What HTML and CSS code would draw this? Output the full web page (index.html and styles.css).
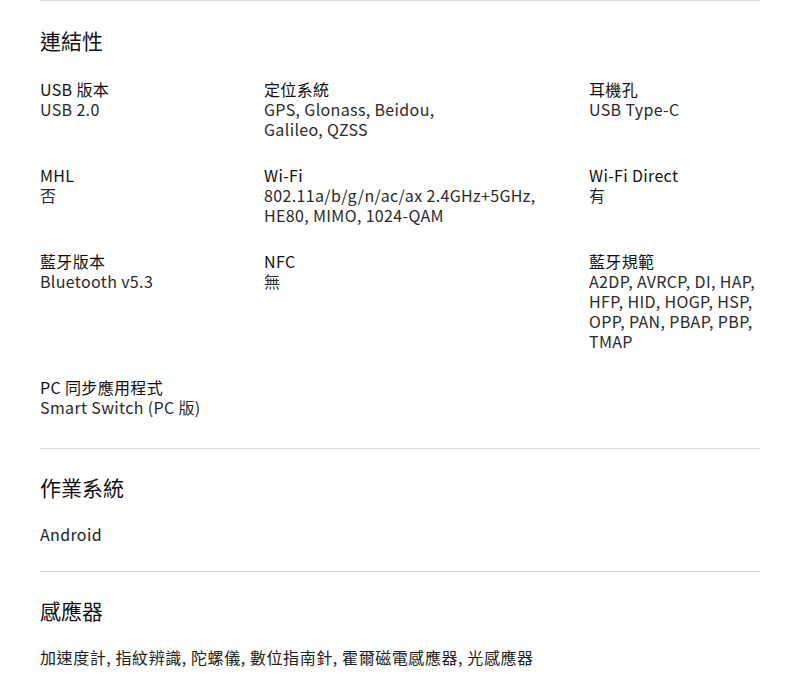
FILE: index.html
```html
<!DOCTYPE html>
<html lang="zh-Hant">
<head>
<meta charset="utf-8">
<title>規格</title>
<link rel="stylesheet" href="styles.css">
</head>
<body>
<div class="specs">
  <section class="spec-section spec-section--grid">
    <h2 class="spec-title">連結性</h2>
    <div class="spec-grid">
      <div class="spec-item"><div class="spec-name">USB 版本</div><div class="spec-value">USB 2.0</div></div>
      <div class="spec-item"><div class="spec-name">定位系統</div><div class="spec-value">GPS, Glonass, Beidou,<br>Galileo, QZSS</div></div>
      <div class="spec-item"><div class="spec-name">耳機孔</div><div class="spec-value">USB Type-C</div></div>
      <div class="spec-item"><div class="spec-name">MHL</div><div class="spec-value">否</div></div>
      <div class="spec-item"><div class="spec-name">Wi-Fi</div><div class="spec-value">802.11a/b/g/n/ac/ax 2.4GHz+5GHz,<br>HE80, MIMO, 1024-QAM</div></div>
      <div class="spec-item"><div class="spec-name">Wi-Fi Direct</div><div class="spec-value">有</div></div>
      <div class="spec-item"><div class="spec-name">藍牙版本</div><div class="spec-value">Bluetooth v5.3</div></div>
      <div class="spec-item"><div class="spec-name">NFC</div><div class="spec-value">無</div></div>
      <div class="spec-item"><div class="spec-name">藍牙規範</div><div class="spec-value">A2DP, AVRCP, DI, HAP,<br>HFP, HID, HOGP, HSP,<br>OPP, PAN, PBAP, PBP,<br>TMAP</div></div>
      <div class="spec-item"><div class="spec-name">PC 同步應用程式</div><div class="spec-value">Smart Switch (PC 版)</div></div>
    </div>
  </section>
  <section class="spec-section">
    <h2 class="spec-title">作業系統</h2>
    <div class="spec-plain">Android</div>
  </section>
  <section class="spec-section">
    <h2 class="spec-title">感應器</h2>
    <div class="spec-plain spec-plain--list">加速度計, 指紋辨識, 陀螺儀, 數位指南針, 霍爾磁電感應器, 光感應器</div>
  </section>
</div>
</body>
</html>
```
FILE: styles.css
```css
html, body {
  margin: 0;
  padding: 0;
  background: #fff;
}
body {
  font-family: "Noto Sans CJK TC", "Noto Sans", sans-serif;
  color: #1a1a1a;
  font-size: 16px;
  line-height: 20px;
  font-weight: 400;
  letter-spacing: 0.35px;
}
.specs {
  padding: 0 40px;
}
.spec-section {
  border-top: 1px solid #dddddd;
  padding: 23px 0 27px;
}
.spec-section--grid {
  padding: 24px 0 31px;
}
.spec-title {
  margin: 0 0 22px;
  font-size: 21px;
  line-height: 30px;
  font-weight: 400;
  letter-spacing: 0;
  color: #111;
}
.spec-section--grid .spec-title {
  margin-bottom: 24px;
}
.spec-grid {
  display: grid;
  grid-template-columns: 224px 325px 171px;
  row-gap: 26px;
}
.spec-name {
  color: #111;
}
.spec-value {
  color: #2a2a2a;
}
.spec-plain {
  color: #222;
}
.spec-plain--list {
  letter-spacing: 0.58px;
}
```
